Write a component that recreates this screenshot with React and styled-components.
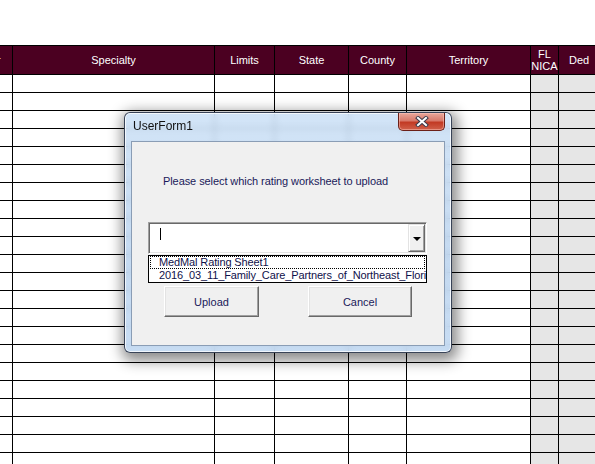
import React from "react";
import styled, { createGlobalStyle } from "styled-components";

const Global = createGlobalStyle`
  html, body { margin: 0; padding: 0; background: #fff; overflow: hidden; }
  body { width: 595px; height: 464px; font-family: "Liberation Sans", Arial, sans-serif; }
`;

const Page = styled.div`
  position: relative;
  width: 595px;
  height: 464px;
  overflow: hidden;
  background: #fff;
`;

const TopSpace = styled.div`
  height: 45px;
`;

const COLS = "13px 202px 60px 74px 58px 124px 28px 90px";

const HeaderRow = styled.div`
  display: grid;
  grid-template-columns: ${COLS};
  height: 30px;
  border-top: 1px solid #000;
  box-sizing: border-box;
  width: max-content;
`;

const HeadCell = styled.div`
  box-sizing: border-box;
  background: #4b0021;
  color: #fff;
  border-right: 1px solid #000;
  border-bottom: 1px solid #000;
  font-size: 11px;
  line-height: 12px;
  display: flex;
  align-items: center;
  justify-content: ${(p) => p.$align || "center"};
  text-align: center;
  overflow: hidden;
  white-space: nowrap;
  padding-left: ${(p) => p.$pl || 0}px;
`;

const Row = styled.div`
  display: grid;
  grid-template-columns: ${COLS};
  height: 18px;
  width: max-content;
`;

const Cell = styled.div`
  box-sizing: border-box;
  border-right: 1px solid #000;
  border-bottom: 1px solid #000;
  background: ${(p) => (p.$shade ? "#e6e6e6" : "#fff")};
`;

const Dialog = styled.div`
  position: absolute;
  left: 124px;
  top: 112px;
  width: 328px;
  height: 241px;
  box-sizing: border-box;
  border: 1px solid rgba(30, 40, 60, 0.85);
  border-radius: 6px;
  background: linear-gradient(180deg, rgba(200, 222, 245, 0.82) 0%, rgba(186, 211, 238, 0.85) 60%, rgba(192, 216, 242, 0.88) 100%);
  backdrop-filter: blur(3px);
  box-shadow: 2px 4px 14px 4px rgba(0, 0, 0, 0.45), inset 0 0 0 1px rgba(255, 255, 255, 0.75);
  display: flex;
  flex-direction: column;
`;

const TitleBar = styled.div`
  height: 28px;
  display: flex;
  align-items: flex-start;
  justify-content: space-between;
  padding: 0 6px 0 8px;
`;

const Title = styled.div`
  font-family: "Liberation Sans", Arial, sans-serif;
  font-size: 12px;
  color: #111;
  margin-top: 6px;
`;

const CloseBtn = styled.div`
  width: 47px;
  height: 18px;
  box-sizing: border-box;
  border: 1px solid #6b2018;
  border-top: none;
  border-radius: 0 0 5px 5px;
  background: linear-gradient(180deg, #e8a89c 0%, #d8796a 45%, #c23a24 55%, #d0604a 100%);
  box-shadow: inset 0 0 0 1px rgba(255, 200, 190, 0.5);
  display: flex;
  align-items: center;
  justify-content: center;
`;

const Client = styled.div`
  flex: 1;
  margin: 0 6px 6px;
  border: 1px solid #8a9db5;
  background: #f0f0f0;
  display: flex;
  flex-direction: column;
  align-items: flex-start;
`;

const Label = styled.div`
  margin: 33px 0 0 31px;
  font-size: 11px;
  line-height: 13px;
  letter-spacing: -0.08px;
  color: #1a1a5a;
  white-space: nowrap;
`;

const Combo = styled.div`
  margin: 34px 0 0 16px;
  width: 279px;
  height: 32px;
  box-sizing: border-box;
  background: #fff;
  border: 1px solid;
  border-color: #a0a0a0 #fff #fff #a0a0a0;
  box-shadow: inset 1px 1px #696969, inset -1px -1px #e3e3e3;
  display: flex;
  justify-content: space-between;
  align-items: stretch;
  padding: 1px 1px 1px 0;
`;

const Caret = styled.span`
  width: 1px;
  height: 12px;
  background: #000;
  margin: 4px 0 0 11px;
`;

const DropBtn = styled.div`
  width: 17px;
  box-sizing: border-box;
  background: #f0f0f0;
  border: 1px solid;
  border-color: #e3e3e3 #696969 #696969 #e3e3e3;
  box-shadow: inset 1px 1px #fff, inset -1px -1px #a0a0a0;
  display: flex;
  align-items: center;
  justify-content: center;
`;

const Arrow = styled.span`
  width: 0;
  height: 0;
  border-left: 4px solid transparent;
  border-right: 4px solid transparent;
  border-top: 4px solid #000;
  margin-top: 1px;
`;

const List = styled.div`
  margin: 1px 0 0 16px;
  width: 279px;
  height: 28px;
  box-sizing: border-box;
  border: 1px solid #000;
  background: #fff;
  padding: 0 1px;
  overflow: hidden;
`;

const Item = styled.div`
  height: 13px;
  box-sizing: border-box;
  font-size: 11px;
  line-height: 11px;
  letter-spacing: -0.12px;
  color: #10104a;
  padding-left: 8px;
  white-space: nowrap;
  border: 1px dotted ${(p) => (p.$focus ? "#000" : "transparent")};
`;

const ButtonRow = styled.div`
  display: flex;
  gap: 49px;
  margin: 3px 0 0 32px;
`;

const Button = styled.div`
  width: ${(p) => p.$w}px;
  height: 31px;
  box-sizing: border-box;
  background: #f0f0f0;
  border: 1px solid;
  border-color: #fff #696969 #696969 #fff;
  box-shadow: inset -1px -1px #a0a0a0, inset 1px 1px #e3e3e3;
  display: flex;
  align-items: center;
  justify-content: center;
  font-size: 11px;
  color: #1a1a5a;
`;

const FirstHead = styled.span`
  margin-left: -3px;
`;

const headers = [
  { t: <FirstHead>r</FirstHead>, align: "flex-start" },
  { t: "Specialty" },
  { t: "Limits" },
  { t: "State" },
  { t: "County" },
  { t: "Territory" },
  { t: <>FL<br />NICA</> },
  { t: "Ded", align: "flex-start", pl: 10 },
];

export default function App() {
  const rows = Array.from({ length: 22 });
  return (
    <Page>
      <Global />
      <TopSpace />
      <HeaderRow>
        {headers.map((h, i) => (
          <HeadCell key={i} $align={h.align} $pl={h.pl}>
            {h.t}
          </HeadCell>
        ))}
      </HeaderRow>
      {rows.map((_, r) => (
        <Row key={r}>
          {headers.map((_, c) => (
            <Cell key={c} $shade={c >= 6} />
          ))}
        </Row>
      ))}
      <Dialog>
        <TitleBar>
          <Title>UserForm1</Title>
          <CloseBtn>
            <svg width="14" height="11" viewBox="0 0 14 11">
              <path d="M3 2 L11 9 M11 2 L3 9" stroke="#3a3a4a" strokeWidth="4" strokeLinecap="square" />
              <path d="M3 2 L11 9 M11 2 L3 9" stroke="#fff" strokeWidth="2" strokeLinecap="square" />
            </svg>
          </CloseBtn>
        </TitleBar>
        <Client>
          <Label>Please select which rating worksheet to upload</Label>
          <Combo>
            <Caret />
            <DropBtn>
              <Arrow />
            </DropBtn>
          </Combo>
          <List>
            <Item $focus>MedMal Rating Sheet1</Item>
            <Item>2016_03_11_Family_Care_Partners_of_Northeast_Florida</Item>
          </List>
          <ButtonRow>
            <Button $w={95}>Upload</Button>
            <Button $w={104}>Cancel</Button>
          </ButtonRow>
        </Client>
      </Dialog>
    </Page>
  );
}
